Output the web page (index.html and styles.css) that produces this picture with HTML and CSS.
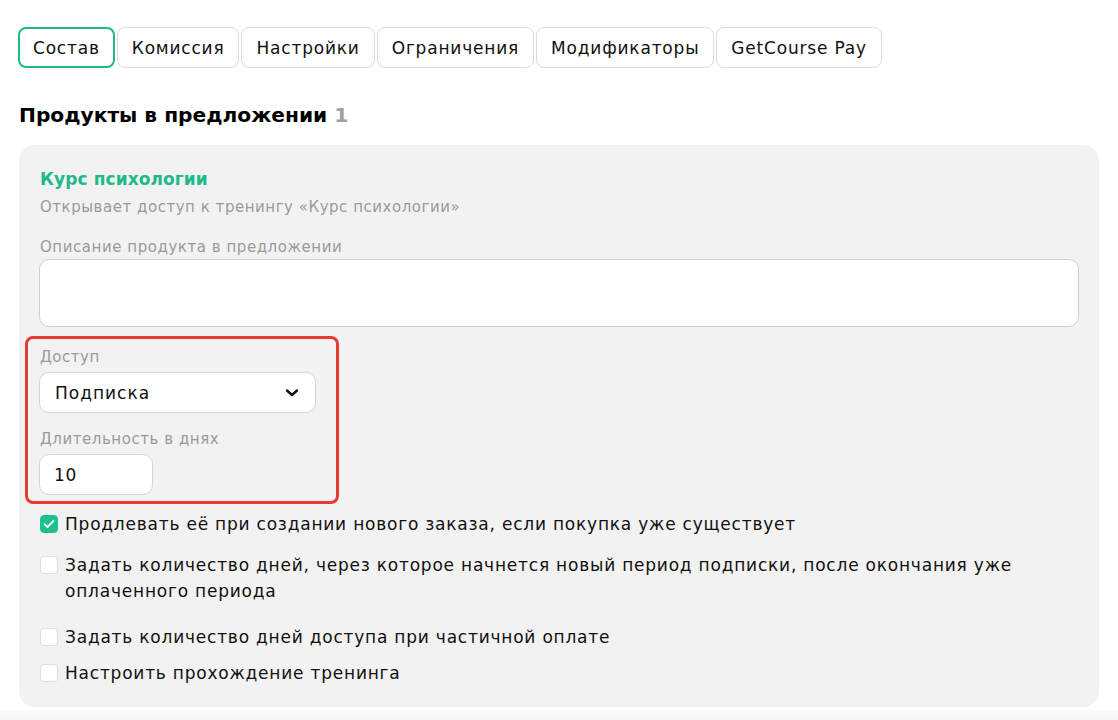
FILE: index.html
```html
<!DOCTYPE html>
<html lang="ru">
<head>
<meta charset="utf-8">
<title>Продукты в предложении</title>
<link rel="stylesheet" href="styles.css">
</head>
<body>
<div class="page">
  <nav class="tabs">
    <div class="tab active">Состав</div>
    <div class="tab">Комиссия</div>
    <div class="tab">Настройки</div>
    <div class="tab">Ограничения</div>
    <div class="tab">Модификаторы</div>
    <div class="tab">GetCourse Pay</div>
  </nav>
  <h2 class="heading">Продукты в предложении <span class="count">1</span></h2>
  <section class="card">
    <div class="product-title">Курс психологии</div>
    <div class="product-sub">Открывает доступ к тренингу «Курс психологии»</div>
    <div class="label">Описание продукта в предложении</div>
    <div class="textarea"></div>
    <div class="highlight">
      <div class="label">Доступ</div>
      <div class="select">
        <span>Подписка</span>
        <svg class="chev" width="14" height="10" viewBox="0 0 14 10"><path d="M2 2.5 L7 7 L12 2.5" fill="none" stroke="#111" stroke-width="2.4" stroke-linecap="round" stroke-linejoin="round"/></svg>
      </div>
      <div class="label label-2">Длительность в днях</div>
      <div class="input">10</div>
    </div>
    <div class="checks">
      <div class="check">
        <span class="box checked"><svg width="12" height="10" viewBox="0 0 12 10"><path d="M1.5 5.2 L4.5 8 L10.5 1.8" fill="none" stroke="#fff" stroke-width="1.8" stroke-linecap="round" stroke-linejoin="round"/></svg></span>
        <span class="ctext">Продлевать её при создании нового заказа, если покупка уже существует</span>
      </div>
      <div class="check gap-md">
        <span class="box"></span>
        <span class="ctext">Задать количество дней, через которое начнется новый период подписки, после окончания уже оплаченного периода</span>
      </div>
      <div class="check gap-lg">
        <span class="box"></span>
        <span class="ctext">Задать количество дней доступа при частичной оплате</span>
      </div>
      <div class="check">
        <span class="box"></span>
        <span class="ctext">Настроить прохождение тренинга</span>
      </div>
    </div>
  </section>
</div>
<div class="bottom-strip"></div>
</body>
</html>
```

FILE: styles.css
```css
* { box-sizing: border-box; }
html, body { margin: 0; padding: 0; background: #fff; }
body {
  font-family: "DejaVu Sans", "Noto Sans", sans-serif;
  color: #111;
  width: 1118px;
  height: 720px;
  overflow: hidden;
  position: relative;
}
.page {
  padding: 27px 19px 0 18px;
}
.tabs {
  display: flex;
  gap: 2px;
}
.tab {
  height: 41px;
  padding: 0 14px;
  border: 1px solid #dcdcdc;
  border-radius: 8px;
  display: flex;
  align-items: center;
  font-size: 17px;
  letter-spacing: 0.8px;
  color: #111;
}
.tab.active {
  border: 2px solid #1fb98a;
  padding: 0 13px;
}
.heading {
  margin: 33px 0 0 1px;
  font-size: 20.2px;
  font-weight: 700;
  line-height: 28px;
  color: #000;
}
.count { color: #a0a0a0; }
.card {
  margin: 16px 0 0 1px;
  width: 1080px;
  height: 562px;
  background: #f2f2f2;
  border-radius: 16px;
  padding: 23px 20px 0 20px;
}
.product-title {
  color: #1fb98a;
  font-size: 17px;
  font-weight: 700;
  line-height: 22px;
  padding-left: 1px;
  letter-spacing: 0.1px;
}
.product-sub {
  margin-top: 7px;
  color: #9a9a9a;
  font-size: 15px;
  line-height: 20px;
  padding-left: 1px;
  letter-spacing: 0.53px;
}
.label {
  color: #9a9a9a;
  font-size: 15px;
  line-height: 20px;
  padding-left: 1px;
  letter-spacing: 0.55px;
}
.card > .label { margin-top: 20px; }
.textarea {
  margin-top: 2px;
  height: 68px;
  background: #fff;
  border: 1px solid #cfcfcf;
  border-radius: 10px;
}
.highlight {
  margin: 9px 0 0 -14px;
  width: 314px;
  border: 3px solid #e53b30;
  border-radius: 8px;
  padding: 8px 20px 6px 11px;
}
.highlight .label { margin-top: 0; }
.select {
  margin-top: 5px;
  height: 41px;
  background: #fff;
  border: 1px solid #d6d6d6;
  border-radius: 10px;
  display: flex;
  align-items: center;
  justify-content: space-between;
  padding: 0 16px 0 15px;
  font-size: 17px;
  letter-spacing: 1px;
}
.chev { display: block; }
.label.label-2 { margin-top: 16px; }
.input {
  margin-top: 5px;
  width: 114px;
  height: 41px;
  background: #fff;
  border: 1px solid #d6d6d6;
  border-radius: 10px;
  display: flex;
  align-items: center;
  padding-left: 14px;
  font-size: 17px;
  letter-spacing: 0.6px;
}
.checks {
  margin-top: 7px;
  display: flex;
  flex-direction: column;
  gap: 10px;
}
.check {
  display: flex;
  align-items: flex-start;
  gap: 7px;
  padding-left: 1px;
}
.check.gap-md { margin-top: 5px; }
.check.gap-lg { margin-top: 10px; }
.box {
  flex: none;
  width: 18px;
  height: 18px;
  margin-top: 4px;
  border-radius: 4px;
  background: #fff;
  border: 1px solid #dedede;
  display: flex;
  align-items: center;
  justify-content: center;
}
.box.checked {
  background: #1fbf8f;
  border-color: #1fbf8f;
}
.ctext {
  font-size: 17px;
  line-height: 26px;
  letter-spacing: 0.78px;
  max-width: 980px;
}
.bottom-strip {
  position: absolute;
  left: 0;
  right: 0;
  bottom: 0;
  height: 10px;
  background: linear-gradient(#fbfbfb, #f5f6f6);
}
```
